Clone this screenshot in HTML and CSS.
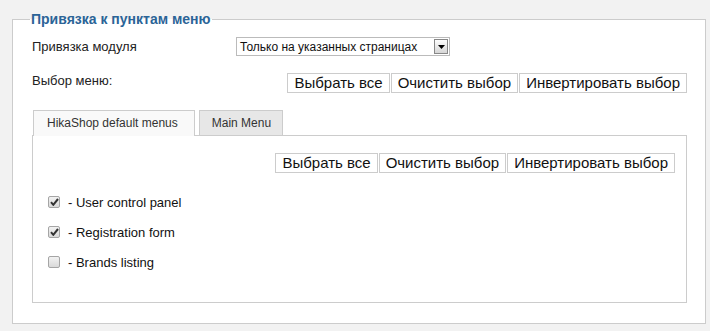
FILE: index.html
```html
<!doctype html>
<html lang="ru">

  <head>
    <meta charset="utf-8">
    <meta name="viewport" content="width=device-width, initial-scale=1">
    <title>Привязка к пунктам меню</title>
    <link rel="stylesheet" href="styles.css">
  </head>

  <body>
    <fieldset class="assign">
      <legend>Привязка к пунктам меню</legend>

      <div class="row">
        <label class="label" for="assignment">Привязка модуля</label>
        <div class="select" id="assignment">
          <span class="select-text">Только на указанных страницах</span>
          <span class="select-arrow">
            <svg width="7" height="4" viewBox="0 0 7 4"><path d="M0 0h7L3.5 4z" fill="#000"/></svg>
          </span>
        </div>
      </div>

      <div class="row row-menu">
        <span class="label">Выбор меню:</span>
        <div class="toolbar">
          <button type="button">Выбрать все</button>
          <button type="button">Очистить выбор</button>
          <button type="button">Инвертировать выбор</button>
        </div>
      </div>

      <div class="tabs">
        <span class="tab active">HikaShop default menus</span>
        <span class="tab">Main Menu</span>
      </div>
      <div class="panel">
        <div class="toolbar">
          <button type="button">Выбрать все</button>
          <button type="button">Очистить выбор</button>
          <button type="button">Инвертировать выбор</button>
        </div>
        <ul class="items">
          <li>
            <span class="check checked"><svg width="9" height="8" viewBox="0 0 9 8"><path d="M1 4.2l2.3 2.6L8 1" fill="none" stroke="#333" stroke-width="2"/></svg></span>
            <span>- User control panel</span>
          </li>
          <li>
            <span class="check checked"><svg width="9" height="8" viewBox="0 0 9 8"><path d="M1 4.2l2.3 2.6L8 1" fill="none" stroke="#333" stroke-width="2"/></svg></span>
            <span>- Registration form</span>
          </li>
          <li>
            <span class="check"></span>
            <span>- Brands listing</span>
          </li>
        </ul>
      </div>
    </fieldset>
  </body>

</html>
```

FILE: styles.css
```css
html,
body {
  margin: 0;
  padding: 0;
}

body {
  padding: 11px 4px 0 12px;
  background: #f2f2f2;
  font-family: "Liberation Sans", Arial, sans-serif;
  font-size: 13px;
  color: #222;
}

.assign {
  margin: 0;
  padding: 10px 18px 20px 19px;
  border: 1px solid #ccc;
  background: #fff;
}

legend {
  padding: 0 1px;
  margin-left: -2px;
  font-size: 14px;
  line-height: 16px;
  font-weight: bold;
  color: #2b6497;
}

.row {
  display: flex;
  align-items: center;
}

.label {
  width: 204px;
  line-height: 16px;
}

.row-menu {
  margin-top: 17px;
  align-items: flex-start;
}

.select {
  display: flex;
  align-items: center;
  width: 212px;
  height: 17px;
  border: 1px solid #bbb;
  background: #fff;
  font-size: 12px;
  color: #111;
}

.select-text {
  flex: 1;
  padding-left: 3px;
}

.select-arrow {
  display: flex;
  align-items: center;
  justify-content: center;
  width: 12px;
  height: 13px;
  margin-right: 1px;
  border: 1px solid #888;
  background: linear-gradient(#fdfdfd, #d6d6d6);
}

.toolbar {
  flex: 1;
  display: flex;
  justify-content: flex-end;
}

.toolbar button {
  height: 20px;
  margin: 0 0 0 1px;
  padding: 0 6px;
  border: 1px solid #ccc;
  background: #fff;
  font-family: inherit;
  font-size: 15px;
  line-height: 18px;
  color: #111;
}

.tabs {
  display: flex;
  gap: 4px;
  margin-top: 17px;
  padding-left: 1px;
}

.tab {
  height: 24px;
  padding: 0 11px 0 12px;
  border: 1px solid #ccc;
  border-bottom: 0;
  background: #e7e7e7;
  font-size: 12px;
  line-height: 25px;
  color: #333;
}

.tab.active {
  position: relative;
  margin-bottom: -1px;
  height: 25px;
  padding: 0 16px 0 13px;
  background: #f9f9f9;
}

.panel {
  padding: 17px 11px 25px 15px;
  border: 1px solid #ccc;
  background: #fff;
}

.items {
  list-style: none;
  margin: 14px 0 0;
  padding: 0;
}

.items li {
  display: flex;
  align-items: center;
  gap: 8px;
  height: 30px;
  color: #111;
}

.check {
  display: flex;
  align-items: center;
  justify-content: center;
  box-sizing: border-box;
  width: 12px;
  height: 12px;
  border: 1px solid #a5a5a5;
  border-radius: 2px;
  background: linear-gradient(#f2f2f2, #d9d9d9);
}
```
